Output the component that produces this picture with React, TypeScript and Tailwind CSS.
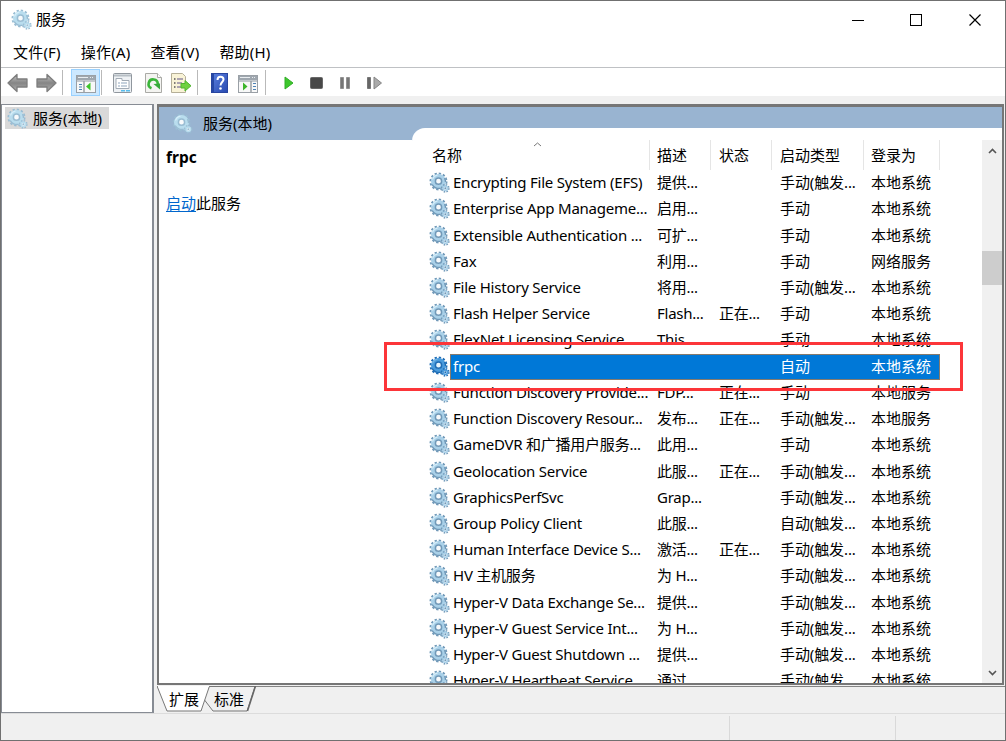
import React from 'react';
import clsx from 'clsx';

type Service = {
  name: string;
  description: string;
  status?: string;
  startup: string;
  logon: string;
  selected?: boolean;
};

const services: Service[] = [
  { name: 'Encrypting File System (EFS)', description: '提供...', startup: '手动(触发...', logon: '本地系统' },
  { name: 'Enterprise App Manageme...', description: '启用...', startup: '手动', logon: '本地系统' },
  { name: 'Extensible Authentication ...', description: '可扩...', startup: '手动', logon: '本地系统' },
  { name: 'Fax', description: '利用...', startup: '手动', logon: '网络服务' },
  { name: 'File History Service', description: '将用...', startup: '手动(触发...', logon: '本地系统' },
  { name: 'Flash Helper Service', description: 'Flash...', status: '正在...', startup: '手动', logon: '本地系统' },
  { name: 'FlexNet Licensing Service', description: 'This ...', startup: '手动', logon: '本地系统' },
  { name: 'frpc', description: '', startup: '自动', logon: '本地系统', selected: true },
  { name: 'Function Discovery Provide...', description: 'FDP...', status: '正在...', startup: '手动', logon: '本地服务' },
  { name: 'Function Discovery Resour...', description: '发布...', status: '正在...', startup: '手动(触发...', logon: '本地服务' },
  { name: 'GameDVR 和广播用户服务...', description: '此用...', startup: '手动', logon: '本地系统' },
  { name: 'Geolocation Service', description: '此服...', status: '正在...', startup: '手动(触发...', logon: '本地系统' },
  { name: 'GraphicsPerfSvc', description: 'Grap...', startup: '手动(触发...', logon: '本地系统' },
  { name: 'Group Policy Client', description: '此服...', startup: '自动(触发...', logon: '本地系统' },
  { name: 'Human Interface Device S...', description: '激活...', status: '正在...', startup: '手动(触发...', logon: '本地系统' },
  { name: 'HV 主机服务', description: '为 H...', startup: '手动(触发...', logon: '本地系统' },
  { name: 'Hyper-V Data Exchange Se...', description: '提供...', startup: '手动(触发...', logon: '本地系统' },
  { name: 'Hyper-V Guest Service Int...', description: '为 H...', startup: '手动(触发...', logon: '本地系统' },
  { name: 'Hyper-V Guest Shutdown ...', description: '提供...', startup: '手动(触发...', logon: '本地系统' },
  { name: 'Hyper-V Heartbeat Service', description: '通过...', startup: '手动(触发...', logon: '本地系统' },
];

const menus = ['文件(F)', '操作(A)', '查看(V)', '帮助(H)'];

const GearIcon = ({ variant = 'normal' }: { variant?: 'normal' | 'soft' | 'selected' }) => {
  const selected = variant === 'selected';
  const soft = variant === 'soft';
  const edge = selected ? '#1f6cb4' : soft ? '#9abdd3' : '#7199b8';
  const body = selected ? '#4a9bdc' : soft ? '#b9ddee' : '#a9d0e8';
  const hole = selected ? '#e8f4fc' : '#f8fafc';
  return (
    <svg width="21" height="21" viewBox="0 0 21 21" className="block shrink-0">
      <circle cx="9.5" cy="9.5" r="8" fill="none" stroke={edge} strokeWidth="2" strokeDasharray="2.3 1.89" />
      <circle cx="9.5" cy="9.5" r="5.3" fill="none" stroke={body} strokeWidth="4.4" />
      <path d="M3.200 12.500a7 7 0 0 0 8.500 3.700M15.500 6.200a7 7 0 0 1 1 3.800" fill="none" stroke={edge} strokeWidth="1.400" />
      <path d="M3.500 7.500a6.500 6.500 0 0 1 5-4.300" fill="none" stroke="#d8effa" strokeWidth="1.200" opacity={selected ? 0.3 : 0.9} />
      <circle cx="9.5" cy="9.2" r="3.100" fill={hole} stroke={edge} strokeWidth="1.500" />
      <circle cx="16.300" cy="16.300" r="3.500" fill="none" stroke={edge} strokeWidth="1.700" strokeDasharray="1.500 1.250" />
      <circle cx="16.300" cy="16.300" r="2.200" fill={hole} stroke={body} strokeWidth="1.600" />
      <circle cx="16.300" cy="16.300" r="1" fill={edge} />
    </svg>
  );
};

const ArrowIcon = ({ flip }: { flip?: boolean }) => (
  <svg width="21" height="20" viewBox="0 0 21 20" className={clsx('block shrink-0', flip && '-scale-x-100')}>
    <defs>
      <linearGradient id="arrow" x1="0" y1="0" x2="0" y2="1">
        <stop offset="0" stopColor="#c4c4c4" />
        <stop offset="0.5" stopColor="#858585" />
        <stop offset="1" stopColor="#b0b0b0" />
      </linearGradient>
    </defs>
    <path d="M1 10 10 1.5V6h10v8H10v4.500Z" fill="url(#arrow)" stroke="#7d7d7d" strokeWidth="1.3" strokeLinejoin="round" />
  </svg>
);

const Separator = ({ className }: { className?: string }) => (
  <div className={clsx('h-[25px] w-px shrink-0 bg-[#b9b9b9]', className)} />
);

// Window with a side pane, the pane sits left or right
const PaneIcon = ({ right }: { right?: boolean }) => (
  <svg width="20" height="18" viewBox="0 0 20 18" className="block shrink-0">
    <rect x="0.5" y="0.500" width="19" height="17" fill="#f8f8f8" stroke="#9aa0a6" />
    <rect x="1" y="1" width="18" height="4" fill="#9fa7af" />
    <path d="M2 2.500h10M14 2.500h1M16 2.500h1" stroke="#e9edf0" />
    <path d="M1 6h18" stroke="#c3c8cd" strokeWidth="2" />
    <path d={right ? 'M13 6v11' : 'M8 6v11'} stroke="#9aa0a6" strokeWidth="1.500" />
    {right ? (
      <>
        <path d="M15 8.500h3M15 11.500h3M15 14.500h3" stroke="#4f83b5" />
        <path d="m5 7.500 4.500 4-4.500 4Z" fill="#3db52b" />
      </>
    ) : (
      <>
        <path d="M3 9.500h3M3 12h3M3 14.500h3" stroke="#4f83b5" />
        <path d="m14.500 7.500-4.500 4 4.500 4Z" fill="#3fc52b" />
      </>
    )}
  </svg>
);

const PropertiesIcon = () => (
  <svg width="19" height="20" viewBox="0 0 19 20" className="block shrink-0">
    <rect x="0.500" y="0.500" width="18" height="19" rx="1" fill="#eef1f4" stroke="#90979e" />
    <path d="M1 2.500h17" stroke="#b7bec5" strokeWidth="2" />
    <path d="M3 5.500h6v2h7v8H3Z" fill="#fff" stroke="#a2abb5" />
    <path d="M5 10h2M8 10h6M5 13h2M8 13h6" stroke="#8fa5bc" />
    <path d="M8 17.700h4M13 17.700h4" stroke="#58bdec" strokeWidth="1.600" />
  </svg>
);

const RefreshIcon = () => (
  <svg width="17" height="20" viewBox="0 0 17 20" className="block shrink-0">
    <path d="M.5.500h12l4 4v15H.5Z" fill="#f4f4f1" stroke="#aaaaa6" />
    <path d="M12.500.500v4h4" fill="#fff" stroke="#aaaaa6" />
    <path d="M6.500 15.300A4.600 4.600 0 1 1 12.800 11" fill="none" stroke="#3bb53a" strokeWidth="2.600" />
    <path d="m8.500 11 6.500-.5v6Z" fill="#36a93a" />
  </svg>
);

const ExportIcon = () => (
  <svg width="21" height="20" viewBox="0 0 21 20" className="block shrink-0">
    <path d="M.5.500h11l3 3v16H.5Z" fill="#f9f3d7" stroke="#b5af98" />
    <path d="M3 6h1.500M3 10h1.500M3 14h1.500" stroke="#555" strokeWidth="1.500" />
    <path d="M6 6h6M6 10h5M6 14h5" stroke="#9289a4" strokeWidth="1.300" />
    <path d="M10 10.500h4V7.500l6 5.300-6 5.200v-3h-4Z" fill="#6fd13f" stroke="#50b52e" />
  </svg>
);

const HelpIcon = () => (
  <svg width="17" height="20" viewBox="0 0 17 20" className="block shrink-0">
    <defs>
      <linearGradient id="help" x1="0" y1="0" x2="1" y2="1">
        <stop offset="0" stopColor="#5b80df" />
        <stop offset="1" stopColor="#2749b0" />
      </linearGradient>
    </defs>
    <rect x="0.500" y="0.500" width="16" height="19" fill="url(#help)" stroke="#2845a0" />
    <path d="M2 1v18" stroke="#2647a5" strokeWidth="2" />
    <path d="M6.500 7c0-4.500 6-4 6-.5 0 2.500-3 2.500-3 6" fill="none" stroke="#fff" strokeWidth="2" />
    <circle cx="9.500" cy="15.500" r="1.300" fill="#fff" />
  </svg>
);

const Toolbar = () => (
  <div className="flex h-[29px] items-center border-t border-[#bfc1c4] bg-white pt-px pl-1.5">
    <ArrowIcon />
    <div className="w-2" />
    <ArrowIcon flip />
    <Separator className="ml-[5px]" />
    <div className="ml-2 flex h-[27px] w-[29px] items-center justify-center border border-[#99d1ff] bg-[#cce8ff] pt-[3px]">
      <PaneIcon />
    </div>
    <Separator className="ml-px" />
    <div className="ml-[11px] flex items-center gap-[13px]">
      <PropertiesIcon />
      <RefreshIcon />
    </div>
    <div className="ml-[9px]"><ExportIcon /></div>
    <Separator className="ml-[5px]" />
    <div className="ml-[13px]"><HelpIcon /></div>
    <div className="ml-[10px] pt-[3px]"><PaneIcon right /></div>
    <Separator className="ml-[7px]" />
    <svg width="100" height="16" viewBox="0 0 100 16" className="ml-[18px] block">
      <path d="m1 2 8 6-8 6Z" fill="#3dc72c" stroke="#31ae27" />
      <rect x="26.500" y="2.500" width="12" height="11" rx="1" fill="#484848" stroke="#686868" />
      <path d="M56.500 2.500h3v11h-3ZM62.500 2.500h3v11h-3Z" fill="#777" stroke="#929292" />
      <path d="M83.500 2.500h3v11h-3Z" fill="#666" stroke="#777" />
      <path d="m90 2 7.500 6L90 14Z" fill="#aaa" stroke="#858585" />
    </svg>
  </div>
);

const TitleBar = () => (
  <div className="flex h-[37px] shrink-0 items-center justify-between pl-2.5">
    <div className="flex items-center gap-1">
      <GearIcon variant="soft" />
      <span>服务</span>
    </div>
    <svg width="154" height="14" viewBox="0 0 154 14" className="block" fill="none" stroke="#000" shapeRendering="crispEdges">
      <path d="M1 7.500h12M59.500 1.500h11v11h-11z" />
      <path d="m118.500 1.500 11 11m0-11-11 11" shapeRendering="auto" strokeWidth="1.200" />
    </svg>
  </div>
);

const ServiceRow = ({ service }: { service: Service }) => (
  <div className="flex h-[26.230px] w-[528px] shrink-0 items-center pl-[17px] leading-[22px]">
    <div className="pb-px">
      <GearIcon variant={service.selected ? 'selected' : 'normal'} />
    </div>
    <div
      className={clsx(
        'flex h-[26px] flex-1 items-center border pb-[2px] pl-[2px] whitespace-nowrap',
        service.selected ? 'border-[#867a6c] bg-[#0078d7] text-white' : 'border-transparent'
      )}
    >
      <span className="w-[204px] tracking-[-0.230px]">{service.name}</span>
      <span className="w-[62px] tracking-[-0.250px]">{service.description}</span>
      <span className="w-[61px] tracking-[-0.250px]">{service.status}</span>
      <span className="w-[91px] tracking-[-0.100px]">{service.startup}</span>
      <span>{service.logon}</span>
    </div>
  </div>
);

const ServiceList = () => (
  <div className="mt-[21px] flex min-w-0 flex-1 overflow-hidden rounded-tl-[13px] bg-white pt-3">
    <div className="flex min-w-0 flex-1 flex-col overflow-hidden">
      <div className="flex h-[30px] shrink-0 leading-[31px]">
        <div className="relative w-[238px] border-r border-[#e5e5e5] pl-5">
          名称
          <svg width="9" height="5" viewBox="0 0 9 5" className="absolute top-[2px] left-[121px]">
            <path d="m1 4 3.500-3L8 4" fill="none" stroke="#777" />
          </svg>
        </div>
        <div className="w-[61px] border-r border-[#e5e5e5] pl-[7px]">描述</div>
        <div className="w-[61px] border-r border-[#e5e5e5] pl-2">状态</div>
        <div className="w-[92px] border-r border-[#e5e5e5] pl-2">启动类型</div>
        <div className="w-[76px] border-r border-[#e5e5e5] pl-[7px]">登录为</div>
      </div>
      {services.map((service) => (
        <ServiceRow key={service.name} service={service} />
      ))}
    </div>
    <div className="flex w-5 shrink-0 flex-col items-center bg-[#f0f0f0]">
      <svg width="9" height="6" viewBox="0 0 9 6" className="mt-2 shrink-0">
        <path d="m1 5 3.500-3.500L8 5" fill="none" stroke="#555" strokeWidth="1.600" />
      </svg>
      <div className="mt-[97px] h-[34px] w-full bg-[#cdcdcd]" />
      <svg width="9" height="6" viewBox="0 0 9 6" className="mt-auto mb-[7px] shrink-0">
        <path d="m1 1 3.500 3.500L8 1" fill="none" stroke="#555" strokeWidth="1.600" />
      </svg>
    </div>
  </div>
);

const Tabs = () => (
  <div className="relative mt-px flex h-[26px] shrink-0 border-t border-[#858585]">
    <svg width="100" height="26" viewBox="0 0 100 26" className="absolute -top-px left-0">
      <path d="M46 12 52 .5h46L90 25H56Z" fill="#f0f0f0" stroke="#777" />
      <path d="m98.500 0-8 25" stroke="#666" strokeWidth="1.500" />
      <path d="M0 0 10 25h34L52.500 0Z" fill="#fff" stroke="#777" />
      <path d="M1 .5h51" stroke="#fff" />
    </svg>
    <span className="relative pl-[12px] leading-[25px]">扩展</span>
    <span className="relative pl-[15px] leading-[25px]">标准</span>
  </div>
);

const App = () => (
  <div className="relative flex h-[741px] w-[1006px] flex-col overflow-hidden border border-[#707070] bg-[#f0f0f0] font-['Noto_Sans','Noto_Sans_CJK_SC',sans-serif] text-[15px] text-black">
    <div className="flex h-[66px] shrink-0 flex-col bg-white">
      <TitleBar />
      <div className="flex gap-[20px] pl-3 leading-[29px] tracking-[0.2px]">
        {menus.map((menu) => (
          <span key={menu}>{menu}</span>
        ))}
      </div>
    </div>
    <Toolbar />
    <div className="mt-2 flex h-[609px] shrink-0 gap-[3px]">
      <div className="w-[153px] shrink-0 border border-r-2 border-[#878c94] bg-white">
        <div className="mt-[2px] ml-[3px] flex h-[22px] w-[104px] items-center gap-[5px] bg-[#d9d9d9] pl-[2px] leading-[21px] whitespace-nowrap">
          <GearIcon variant="soft" />
          <span>服务(本地)</span>
        </div>
      </div>
      <div className="flex min-w-0 flex-1 flex-col">
        <div className="mr-px flex h-[581px] shrink-0 border-t-3 border-r-2 border-b-2 border-l-2 border-[#767676] bg-[#99b4d1]">
          <div className="flex w-[253px] shrink-0 flex-col">
            <div className="flex h-[33px] shrink-0 items-center gap-[10px] pl-[13px]">
              <GearIcon variant="soft" />
              <span>服务(本地)</span>
            </div>
            <div className="flex-1 bg-white pl-[7px]">
              <div className="pt-[6px] text-[15.500px] leading-[23px] font-bold">frpc</div>
              <div className="pt-[22px] leading-[24px]">
                <span className="text-[#0066cc] underline underline-offset-2">启动</span>此服务
              </div>
            </div>
          </div>
          <ServiceList />
        </div>
        <Tabs />
      </div>
    </div>
    <div className="flex flex-1 border-t border-[#dcdcdc] pt-[2px]">
      <div className="w-[729px] border-r border-[#d9d9d9]" />
      <div className="w-[166px] border-r border-[#d9d9d9]" />
      <div className="flex-1" />
    </div>
    {/* Highlight around the selected service */}
    <div className="pointer-events-none absolute top-[341px] left-[383px] h-[49px] w-[579px] border-3 border-[#fc3539]" />
  </div>
);

export default App;
